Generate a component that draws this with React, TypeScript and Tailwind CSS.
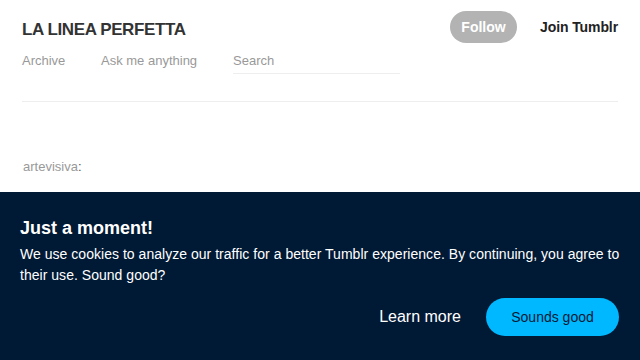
export default function App() {
  return (
    <div className="relative h-[360px] w-[640px] overflow-hidden bg-white font-['Liberation_Sans',Arial,sans-serif]">
      <div className="px-[22px]">
        <header className="flex items-start justify-between">
          <div className="flex flex-col">
            <h1 className="mt-[20px] text-[17px] font-bold leading-[20px] tracking-[-0.4px] text-[#333]">
              LA LINEA PERFETTA
            </h1>
            <nav className="mt-[13px] flex items-start text-[13px] leading-[16px] text-[#999]">
              <a className="w-[79px]">Archive</a>
              <a className="w-[132px]">Ask me anything</a>
              <div className="w-[167px] border-b border-[#eee] pb-[4px] text-[#999]">Search</div>
            </nav>
          </div>
          <div className="mt-[11px] flex items-center">
            <button className="h-[32px] w-[67px] rounded-full bg-[#b3b3b3] text-[14px] font-bold text-white">
              Follow
            </button>
            <span className="ml-[23px] text-[14px] font-bold tracking-[-0.1px] text-[#222]">Join Tumblr</span>
          </div>
        </header>
        <div className="mt-[27px] border-t border-[#eee]" />
        <p className="mt-[55px] pl-[1px] text-[13px] text-[#999]">
          artevisiva<span className="text-[#555]">:</span>
        </p>
      </div>

      <div className="fixed bottom-0 left-0 h-[168px] w-[640px] bg-[#001935] px-[20px] pt-[26px] text-white">
        <h2 className="text-[18px] font-bold leading-[20px]">Just a moment!</h2>
        <p className="mt-[6px] text-[14px] leading-[21px] tracking-[0.03px]">
          We use cookies to analyze our traffic for a better Tumblr experience. By continuing, you agree to their use. Sound good?
        </p>
        <div className="mt-[12px] flex items-center justify-end">
          <button className="text-[16px] text-white">Learn more</button>
          <button className="ml-[25px] mr-[1px] h-[38px] w-[133px] rounded-full bg-[#00b8ff] text-[14px] text-[#001935]">
            Sounds good
          </button>
        </div>
      </div>
    </div>
  )
}
